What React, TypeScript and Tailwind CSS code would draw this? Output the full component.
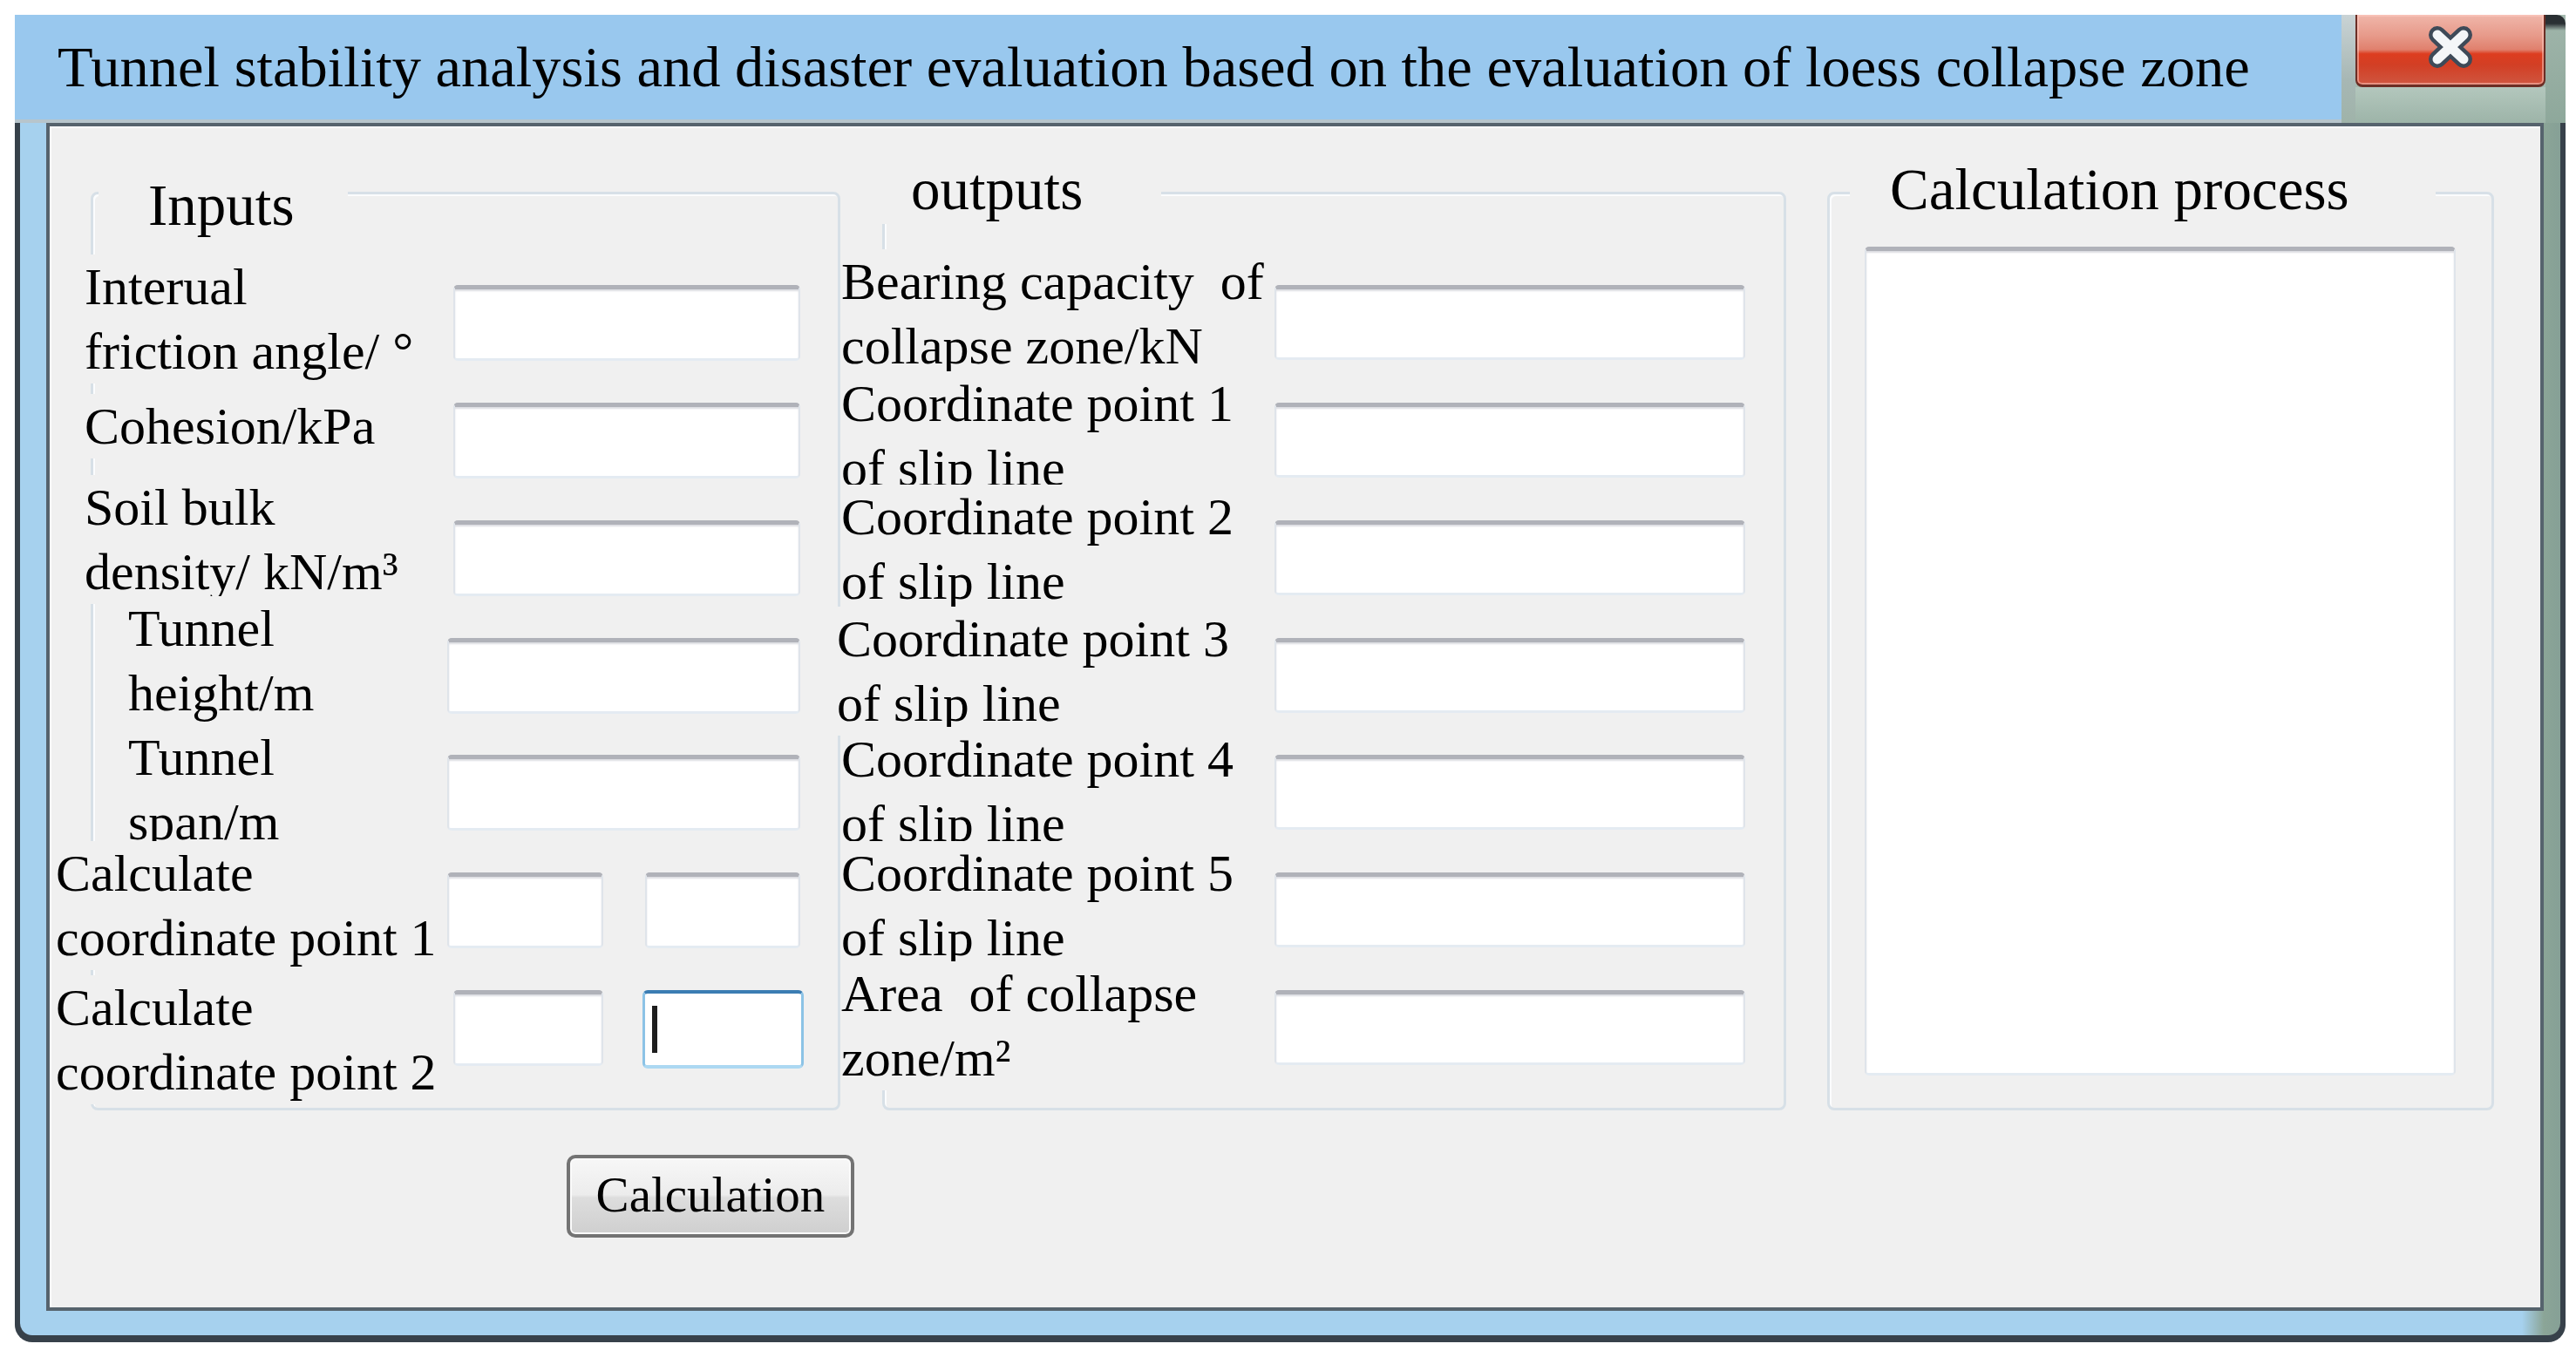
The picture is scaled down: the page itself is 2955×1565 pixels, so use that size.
import React from "react";

const SERIF = "font-['Liberation_Serif','Times_New_Roman',serif]";

function Box({ className }: { className: string }) {
  return (
    <div
      className={
        "shrink-0 rounded-[5px] bg-white border-t-[5px] border-x-[2px] border-b-[3px] border-t-[#b0b2b9] border-x-[#dfe4ea] border-b-[#e4ebf2] shadow-[inset_0_2px_2px_#dcdde2] " +
        className
      }
    />
  );
}

function FocusedBox({ className }: { className: string }) {
  return (
    <div
      className={
        "shrink-0 rounded-[6px] bg-white border-t-[4px] border-x-[3px] border-b-[4px] border-t-[#3b7db3] border-x-[#8cc3e6] border-b-[#acd8f2] pl-[8px] pt-[14px] " +
        className
      }
    >
      <div className="w-[6px] h-[54px] bg-[#1e1e1e]" />
    </div>
  );
}

function Label({ className, children }: { className: string; children: React.ReactNode }) {
  return (
    <div
      className={
        "relative shrink-0 bg-[#f0f0f0] whitespace-nowrap text-[60px] leading-[74px] text-black " + className
      }
    >
      {children}
    </div>
  );
}

function Legend({ className, children }: { className: string; children: React.ReactNode }) {
  return (
    <div
      className={
        "absolute h-[80px] bg-[#f0f0f0] whitespace-nowrap text-[67px] leading-[80px] text-black " + className
      }
    >
      {children}
    </div>
  );
}

export default function App() {
  return (
    <div className={"w-[2955px] h-[1565px] bg-white pl-[17px] pt-[17px] " + SERIF}>
      <div className="flex flex-col w-[2926px] h-[1523px]">
        {/* title row */}
        <div className="flex h-[124px] shrink-0 bg-[#a4b9af]">
          <div className="w-[2669px] h-[124px] border-b-[4px] border-b-[#b7c5cc] bg-[#99c8ee] pl-[49px] text-[66.5px] leading-[120px] whitespace-nowrap text-black">
            Tunnel stability analysis and disaster evaluation based on the evaluation of loess collapse zone
          </div>
          <div className="w-[16px] h-[124px] bg-[linear-gradient(to_bottom,#c9d3d5,#a7b7b4_60%,#9fb3a9)]" />
          <div className="flex flex-col w-[218px]">
            <div className="flex items-center justify-center h-[83px] rounded-b-[8px] border-x-[2px] border-b-[3px] border-[#6b2e25] bg-[linear-gradient(to_bottom,#f0b6aa_0%,#e79a8a_30%,#e0806d_50%,#dd3d1f_56%,#d23f25_72%,#cf5640_100%)] shadow-[inset_0_0_0_2px_rgba(255,205,195,0.5)] pb-[6px]">
              <svg width="64" height="56" viewBox="0 0 64 56">
                <path d="M17 14 L47 42 M47 14 L17 42" stroke="#3e4a58" strokeWidth="20" strokeLinecap="round" fill="none" />
                <path d="M17 14 L47 42 M47 14 L17 42" stroke="#f4f6f8" strokeWidth="11" strokeLinecap="round" fill="none" />
              </svg>
            </div>
            <div className="flex-1 bg-[linear-gradient(to_bottom,#b3c7bd,#9db4a8)]" />
          </div>
          <div className="flex-1 rounded-tr-[10px] bg-[linear-gradient(to_bottom,#2a2f33_0px,#2a2f33_10px,#9db3a8_18px,#8ea89b_100%)]" />
        </div>

        {/* body with frame */}
        <div className="flex flex-1 rounded-b-[20px] bg-[#37414a] px-[6px] pb-[8px]">
          <div className="flex flex-1 rounded-b-[14px] bg-[linear-gradient(to_right,#a6d1ee_0px,#a6d1ee_2870px,#8ba597_2895px,#86a096_2914px)] pl-[30px] pr-[19px] pb-[28px]">
            {/* client */}
            <div className="flex flex-col flex-1 border-[4px] border-[#56636d] bg-[#f0f0f0] shadow-[inset_2px_2px_0_#ffffff] pt-[75px] pl-[47px]">
              <div className="flex items-start">
                {/* Inputs group */}
                <div className="relative flex flex-col shrink-0 w-[860px] h-[1054px] rounded-[8px] border-[3px] border-[#d7e0e7] shadow-[inset_2px_2px_0_#fbfcfd] pt-[104px] pr-[43px]">
                  <Legend className="left-[6px] top-[-28px] w-[286px] pl-[57px]">Inputs</Legend>

                  <div className="flex h-[136px] items-start">
                    <Label className="ml-[-10px] mt-[-35px] w-[420px]">
                      Interual
                      <br />
                      friction angle/ °
                    </Label>
                    <Box className="ml-auto w-[398px] h-[87px]" />
                  </div>
                  <div className="flex h-[136px] items-start">
                    <Label className="ml-[-10px] mt-[-10px] w-[420px]">Cohesion/kPa</Label>
                    <Box className="ml-auto w-[398px] h-[87px]" />
                  </div>
                  <div className="flex h-[136px] items-start">
                    <Label className="ml-[-10px] mt-[-52px] w-[420px]">
                      Soil bulk
                      <br />
                      density/ kN/m³
                    </Label>
                    <Box className="ml-auto w-[398px] h-[87px]" />
                  </div>
                  <div className="flex h-[136px] items-start">
                    <Label className="ml-[40px] mt-[-48px] w-[271px]">
                      Tunnel
                      <br />
                      height/m
                    </Label>
                    <Box className="ml-auto w-[405px] h-[87px]" />
                  </div>
                  <div className="flex h-[136px] items-start">
                    <Label className="ml-[40px] mt-[-34px] w-[271px]">
                      Tunnel
                      <br />
                      span/m
                    </Label>
                    <Box className="ml-auto w-[405px] h-[87px]" />
                  </div>
                  <div className="flex h-[136px] items-start">
                    <Label className="ml-[-43px] mt-[-36px] w-[446px]">
                      Calculate
                      <br />
                      coordinate point 1
                    </Label>
                    <div className="ml-auto flex gap-[48px]">
                      <Box className="w-[179px] h-[87px]" />
                      <Box className="w-[178px] h-[87px]" />
                    </div>
                  </div>
                  <div className="flex h-[136px] items-start">
                    <Label className="ml-[-43px] mt-[-17px] w-[446px]">
                      Calculate
                      <br />
                      coordinate point 2
                    </Label>
                    <div className="ml-auto mr-[-4px] flex gap-[45px]">
                      <Box className="w-[172px] h-[87px]" />
                      <FocusedBox className="w-[185px] h-[90px]" />
                    </div>
                  </div>
                </div>

                {/* Outputs group */}
                <div className="relative flex flex-col shrink-0 ml-[48px] w-[1037px] h-[1054px] rounded-[8px] border-[3px] border-[#d7e0e7] shadow-[inset_2px_2px_0_#fbfcfd] pt-[104px] pr-[44px]">
                  <Legend className="left-[-15px] top-[-46px] w-[332px] pl-[45px]">outputs</Legend>

                  <div className="flex h-[136px] items-start">
                    <Label className="ml-[-50px] mt-[-41px] w-[494px]">
                      Bearing capacity&nbsp; of
                      <br />
                      collapse zone/kN
                    </Label>
                    <Box className="ml-auto w-[540px] h-[86px]" />
                  </div>
                  <div className="flex h-[136px] items-start">
                    <Label className="ml-[-50px] mt-[-36px] w-[494px]">
                      Coordinate point 1
                      <br />
                      of slip line
                    </Label>
                    <Box className="ml-auto w-[540px] h-[86px]" />
                  </div>
                  <div className="flex h-[136px] items-start">
                    <Label className="ml-[-50px] mt-[-41px] w-[494px]">
                      Coordinate point 2
                      <br />
                      of slip line
                    </Label>
                    <Box className="ml-auto w-[540px] h-[86px]" />
                  </div>
                  <div className="flex h-[136px] items-start">
                    <Label className="ml-[-55px] mt-[-36px] w-[499px]">
                      Coordinate point 3
                      <br />
                      of slip line
                    </Label>
                    <Box className="ml-auto w-[540px] h-[86px]" />
                  </div>
                  <div className="flex h-[136px] items-start">
                    <Label className="ml-[-50px] mt-[-32px] w-[494px]">
                      Coordinate point 4
                      <br />
                      of slip line
                    </Label>
                    <Box className="ml-auto w-[540px] h-[86px]" />
                  </div>
                  <div className="flex h-[136px] items-start">
                    <Label className="ml-[-50px] mt-[-36px] w-[494px]">
                      Coordinate point 5
                      <br />
                      of slip line
                    </Label>
                    <Box className="ml-auto w-[540px] h-[86px]" />
                  </div>
                  <div className="flex h-[136px] items-start">
                    <Label className="ml-[-50px] mt-[-33px] w-[494px]">
                      Area&nbsp; of collapse
                      <br />
                      zone/m²
                    </Label>
                    <Box className="ml-auto w-[540px] h-[86px]" />
                  </div>
                </div>

                {/* Calculation process group */}
                <div className="relative shrink-0 ml-[47px] w-[765px] h-[1054px] rounded-[8px] border-[3px] border-[#d7e0e7] shadow-[inset_2px_2px_0_#fbfcfd] pt-[60px] pl-[40px]">
                  <Legend className="left-[23px] top-[-46px] w-[672px] pl-[46px]">Calculation process</Legend>
                  <Box className="w-[678px] h-[951px]" />
                </div>
              </div>

              <div className="mt-[51px] ml-[546px]">
                <button className="w-[330px] h-[95px] rounded-[10px] border-[4px] border-[#737373] bg-[linear-gradient(to_bottom,#f7f7f7_0%,#ececec_48%,#dddddd_52%,#cfcfcf_100%)] shadow-[inset_0_0_0_2px_#fbfbfb] text-[57px] leading-[80px] pb-[4px] text-black">
                  Calculation
                </button>
              </div>
            </div>
          </div>
        </div>
      </div>
    </div>
  );
}
